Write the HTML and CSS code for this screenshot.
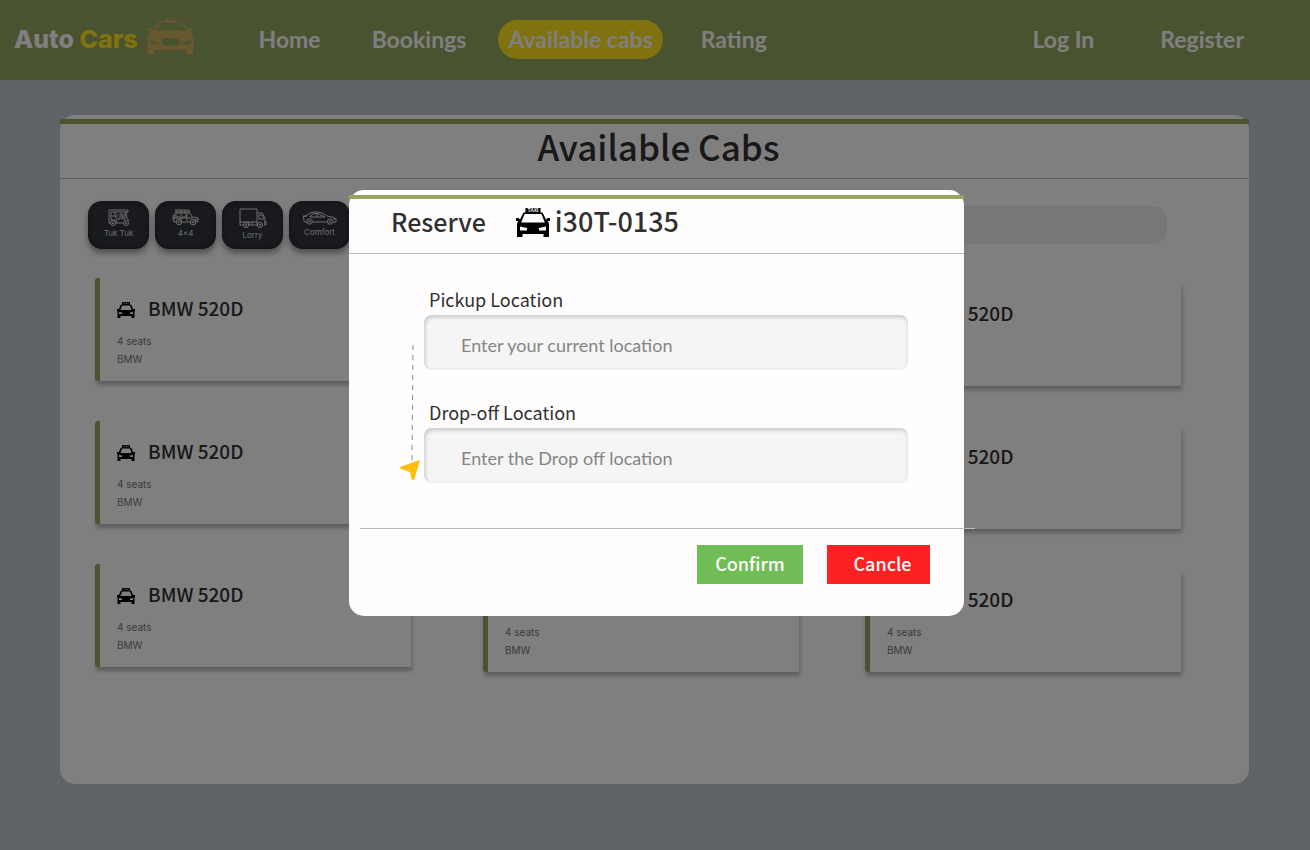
FILE: index.html
```html
<!DOCTYPE html>
<html lang="en">
<head>
<meta charset="utf-8">
<meta name="viewport" content="width=device-width, initial-scale=1">
<title>Auto Cars - Available Cabs</title>
<link rel="stylesheet" href="styles.css">
</head>
<body>
<svg class="sprite" aria-hidden="true">
  <symbol id="cab" viewBox="0 0 18 16">
    <path fill-rule="evenodd" d="M5 0H13V2.500L14.500 3L16 7L18 7V9L17.500 9.500V16H14.500V14H3.500V16H.500V9.500L0 9V7L2 7L3.500 3L5 2.500ZM5 3.500L3.500 8H14.500L13 3.500ZM2 10V12H5V10.500ZM16 10V12H13V10.500ZM6.500 .800V1.700H7.500V.800ZM8.500 .800V1.700H9.500V.800ZM10.500 .800V1.700H11.500V.800Z"/>
  </symbol>
</svg>

<header class="topbar">
  <a class="brand" href="#"><span>Auto <span class="brand-accent">Cars</span></span>
    <svg class="brand-icon" viewBox="0 0 47 36" aria-hidden="true">
      <path fill-rule="evenodd" d="M18.500 0H28.500V3.500H33Q35 3.500 36.500 5.500L41.500 12.500Q42 10 44 10Q47 10 46.500 12L43.500 13.500Q46.500 17 46.500 21V34.500Q46.500 36 45 36H41Q39.500 36 39.500 34.500V32H7.500V34.500Q7.500 36 6 36H2Q.500 36 .500 34.500V21Q.500 17 3.500 13.500L.500 12Q0 10 3 10Q5 10 5.500 12.500L10.500 5.500Q12 3.500 14 3.500H18.500ZM14 4.800Q12.800 4.800 12 6L7.500 12.500H39.500L35 6Q34.200 4.800 33 4.800ZM18 20Q14.500 20 14.500 24Q14.500 27.500 18 27.500H29Q32.500 27.500 32.500 24Q32.500 20 29 20ZM2 22.500Q3 26.500 7 26.300Q11 26 12.500 24Q8 23.800 2 22.500ZM45 22.500Q44 26.500 40 26.300Q36 26 34.500 24Q39 23.800 45 22.500ZM20 1V2.300H27V1Z"/>
    </svg>
  </a>
  <nav class="menu" aria-label="Main">
    <a href="#">Home</a>
    <a href="#">Bookings</a>
    <a class="active" href="#">Available cabs</a>
    <a href="#">Rating</a>
  </nav>
  <nav class="account" aria-label="Account">
    <a href="#">Log In</a>
    <a href="#">Register</a>
  </nav>
</header>

<main class="panel">
  <h1 class="panel-title">Available Cabs</h1>
  <div class="tools">
    <div class="types">
      <button class="type" type="button">
        <svg width="22" height="17" viewBox="0 0 22 17" aria-hidden="true"><path d="M1 1H20V3H3V11M1 1V14H3M7 14H15M3 7H7V3M7 7L9 10H12V5H14V10H17V3M18 3L19 9L21 12M9 5V8M3 11H8L9 13M15 5V9"/><circle cx="5" cy="14" r="2.500"/><circle cx="5" cy="14" r=".700"/><circle cx="18" cy="14" r="2.500"/><circle cx="18" cy="14" r=".700"/></svg>
        <span>Tuk Tuk</span>
      </button>
      <button class="type" type="button">
        <svg width="28" height="17" viewBox="0 0 28 17" aria-hidden="true"><path d="M3 1H17M3 3H18M5 1V4M9 1V4M13 1V4M17 1V4M3 4H18L20 8L26 9V13H24M18 13H9M4 13H2V9L3 4M2 9H20M9 5V12M15 5V12M4 5V8H8M10 8H14V5M1 6V11M22 11H26"/><circle cx="7" cy="13" r="2.800"/><circle cx="7" cy="13" r="1"/><circle cx="21" cy="13" r="2.800"/><circle cx="21" cy="13" r="1"/></svg>
        <span>4×4</span>
      </button>
      <button class="type" type="button">
        <svg width="28" height="20" viewBox="0 0 28 20" aria-hidden="true"><path d="M1 1H18V14H1ZM1 14V17H4M10 17H18M18 5H23L26 10V17H25M20 7H23L25 11H20ZM10 14V17M13 14V17M18 14V17M25 14H27V17"/><circle cx="7" cy="17" r="2.600"/><circle cx="7" cy="17" r=".800"/><circle cx="21" cy="17" r="2.600"/><circle cx="21" cy="17" r=".800"/></svg>
        <span>Lorry</span>
      </button>
      <button class="type" type="button">
        <svg width="36" height="14" viewBox="0 0 36 14" aria-hidden="true"><path d="M5 11H3Q1 10 2 8L1 6Q5 5 8 2Q10 1 16 1Q20 1 25 5Q32 6 34 8V11H31M25 11H10M8 5Q10 2 16 2.500L23 6H8ZM15 2V6M1 5H5M32 7V9"/><circle cx="7.500" cy="10.500" r="2.700"/><circle cx="7.500" cy="10.500" r=".800"/><circle cx="28" cy="10.500" r="2.700"/><circle cx="28" cy="10.500" r=".800"/></svg>
        <span>Comfort</span>
      </button>
    </div>
    <input class="search" type="search" aria-label="Search cabs">
  </div>
  <div class="cabs">
    <div class="column">
      <article class="cab"><h2><svg class="cab-icon" aria-hidden="true"><use href="#cab"/></svg>BMW 520D</h2><p>4 seats</p><p>BMW</p></article>
      <article class="cab"><h2><svg class="cab-icon" aria-hidden="true"><use href="#cab"/></svg>BMW 520D</h2><p>4 seats</p><p>BMW</p></article>
      <article class="cab"><h2><svg class="cab-icon" aria-hidden="true"><use href="#cab"/></svg>BMW 520D</h2><p>4 seats</p><p>BMW</p></article>
    </div>
    <div class="column lower">
      <article class="cab"><h2><svg class="cab-icon" aria-hidden="true"><use href="#cab"/></svg>BMW 520D</h2><p>4 seats</p><p>BMW</p></article>
      <article class="cab"><h2><svg class="cab-icon" aria-hidden="true"><use href="#cab"/></svg>BMW 520D</h2><p>4 seats</p><p>BMW</p></article>
      <article class="cab"><h2><svg class="cab-icon" aria-hidden="true"><use href="#cab"/></svg>BMW 520D</h2><p>4 seats</p><p>BMW</p></article>
    </div>
    <div class="column lower">
      <article class="cab"><h2><svg class="cab-icon" aria-hidden="true"><use href="#cab"/></svg>BMW 520D</h2><p>4 seats</p><p>BMW</p></article>
      <article class="cab"><h2><svg class="cab-icon" aria-hidden="true"><use href="#cab"/></svg>BMW 520D</h2><p>4 seats</p><p>BMW</p></article>
      <article class="cab"><h2><svg class="cab-icon" aria-hidden="true"><use href="#cab"/></svg>BMW 520D</h2><p>4 seats</p><p>BMW</p></article>
    </div>
  </div>
</main>

<div class="overlay">
  <form class="modal" role="dialog" aria-modal="true" aria-labelledby="reserve-title">
    <h2 class="modal-title" id="reserve-title">
      <span class="reserve">Reserve</span>
      <span class="plate">
        <svg class="taxi-icon" viewBox="0 0 34 29" aria-hidden="true">
          <path fill-rule="evenodd" d="M9.500 0H24.500V4.500H26.500L30 11.500L31.500 10H34V13H32L33 16V29H27.500V26H6.500V29H1V16L2 13H0V10H2.500L4 11.500L7.500 4.500H9.500ZM8.600 6L5.200 14.500H28.800L25.400 6ZM4 18.500V22.500H11V20ZM30 18.500V22.500H23V20Z"/>
          <text class="taxi-sign" x="17" y="4" text-anchor="middle">TAXI</text>
        </svg>
        <span>i30T-0135</span>
      </span>
    </h2>
    <div class="route">
      <div class="rail" aria-hidden="true">
        <svg class="dashes" viewBox="0 0 20 115"><path d="M13 0L12 115"/></svg>
        <svg class="arrow" viewBox="0 0 20 20"><path d="M20 0L14.500 19Q13 21 11.500 19L10 12L1 9Q-1 8 1 6.500Z"/></svg>
      </div>
      <div class="fields">
        <div class="field">
          <label for="pickup">Pickup Location</label>
          <input id="pickup" type="text" placeholder="Enter your current location">
        </div>
        <div class="field">
          <label for="dropoff">Drop-off Location</label>
          <input id="dropoff" type="text" placeholder="Enter the Drop off location">
        </div>
      </div>
    </div>
    <hr class="divider">
    <div class="actions">
      <button class="confirm" type="submit">Confirm</button>
      <button class="cancel" type="button">Cancle</button>
    </div>
  </form>
</div>
</body>
</html>
```

FILE: styles.css
```css
:root {
  --green: #94a661;
  --ink: #303030;
  --heading: "Noto Sans CJK KR", "Noto Sans", sans-serif;
  --body: Inter, "Liberation Sans", sans-serif;
}

* { box-sizing: border-box; }

body {
  display: flex;
  flex-direction: column;
  min-height: 100vh;
  margin: 0;
  background: #c0c9cf;
  color: var(--ink);
  font-family: var(--body);
}

h1, h2, p { margin: 0; font-weight: 400; }
a { color: inherit; text-decoration: none; }
button, input { border: 0; font-family: inherit; }
.sprite { position: absolute; width: 0; height: 0; }

.topbar {
  display: flex;
  align-items: center;
  height: 80px;
  padding: 0 66px 2px 14px;
  background: var(--green);
  color: #fff;
  font: 700 23px/39px Lato, sans-serif;
}
.brand {
  display: flex;
  align-items: center;
  gap: 9px;
  margin-right: 65px;
  font: 800 25px/30px var(--body);
}
.brand-accent { color: #ffe41e; }
.brand-icon { width: 47px; height: 36px; margin-bottom: 6px; fill: #ceb060; }
.menu { display: flex; gap: 38px; }
.menu a:first-child { margin-right: 13px; }
.menu a:nth-child(2) { margin-right: -6px; }
.active { padding: 0 10px; border-radius: 20px; background: #ffe41e; }
.account { display: flex; gap: 66px; margin-left: auto; }

.panel {
  flex: 1;
  margin: 35px 61px 66px 60px;
  border-radius: 15px;
  background: #fff;
}
.panel-title {
  margin-top: 4px;
  padding: 0 0 11px 8px;
  border-top: 5px solid var(--green);
  border-bottom: 1px solid #bbb;
  border-radius: 3px 3px 0 0;
  font: 500 35px/43px var(--heading);
  text-align: center;
}

.tools {
  display: flex;
  align-items: center;
  justify-content: space-between;
  padding: 22px 82px 0 28px;
}
.types { display: flex; gap: 6px; }
.type {
  display: flex;
  flex-direction: column;
  align-items: center;
  justify-content: center;
  gap: 2px;
  width: 61px;
  height: 48px;
  padding: 0 0 2px;
  border-radius: 14px;
  background: #30343b;
  box-shadow: 0 4px 6px #0006, inset 0 0 5px #0006;
  color: #ddd;
  font-size: 8px;
  line-height: 11px;
}
.type svg { fill: none; stroke: #ddd; stroke-width: 1; }
.search {
  width: 38%;
  height: 38px;
  padding: 0 16px;
  border-radius: 14px;
  background: #eee;
}

.cabs {
  display: grid;
  grid-template-columns: 322fr 316fr 316fr;
  gap: 66px;
  padding: 29px 68px 24px 35px;
}
.column { display: grid; gap: 40px; }
.column:first-child { padding-right: 6px; }
.lower { position: relative; top: 5px; }
.cab {
  padding: 16px 17px 13px;
  border-left: 5px solid var(--green);
  border-radius: 3px 0 0 3px;
  box-shadow: 1px 4px 4px #0004;
  font-size: 10px;
  line-height: 18px;
  color: #777;
}
.cab h2 {
  display: flex;
  align-items: center;
  gap: 13px;
  margin-bottom: 10px;
  color: var(--ink);
  font: 500 19px/28px var(--heading);
}
.cab-icon { width: 18px; height: 16px; margin-top: 3px; fill: #000; }

.overlay {
  position: fixed;
  inset: 0;
  display: flex;
  align-items: flex-start;
  justify-content: center;
  padding: 190px 24px 24px 27px;
  background: rgba(0, 0, 0, .5);
}
.modal {
  width: 100%;
  max-width: 615px;
  padding-top: 5px;
  border-radius: 15px;
  background: #fffdfe;
}
.modal-title {
  display: flex;
  align-items: center;
  gap: 30px;
  padding: 0 42px 10px;
  border-top: 4px solid var(--green);
  border-bottom: 1px solid #bbb;
  font: 500 27px/44px var(--heading);
}
.reserve { font-size: 25px; }
.plate { display: flex; align-items: center; gap: 5px; }
.taxi-icon { width: 34px; height: 29px; margin-top: 2px; fill: #000; }
.taxi-sign { fill: #fff; font: 700 5px/5px "Liberation Sans", sans-serif; }

.route { display: flex; gap: 4px; padding: 33px 56px 45px 51px; }
.rail { display: flex; flex-direction: column; padding-top: 58px; }
.dashes { width: 20px; height: 115px; fill: none; stroke: #888; stroke-width: 1; stroke-dasharray: 5 5; }
.arrow { width: 20px; height: 20px; fill: #ffbe0b; }
.fields { display: grid; flex: 1; gap: 30px; }
.field { display: flex; flex-direction: column; gap: 4px; }
.field label { padding-left: 5px; font: 400 18px/24px var(--heading); }
.field input {
  width: 100%;
  height: 55px;
  padding: 4px 37px 0;
  border-radius: 8px;
  background: #f5f5f5;
  box-shadow: inset 1px 2px 4px #0003;
  font: 400 18px/24px Lato, sans-serif;
}
.field input::placeholder { color: #858585; opacity: 1; }

.divider { height: 1px; margin: 0 -11px 0 11px; border: 0; background: #bbb; }
.actions {
  display: flex;
  justify-content: flex-end;
  gap: 24px;
  padding: 16px 34px 32px;
}
.actions button {
  height: 39px;
  color: #fff;
  font: 500 18px/28px var(--heading);
}
.confirm { width: 106px; padding: 0 0 3px; background: #70bd56; }
.cancel { width: 103px; padding: 0 0 3px 8px; background: #ff2022; }
```
